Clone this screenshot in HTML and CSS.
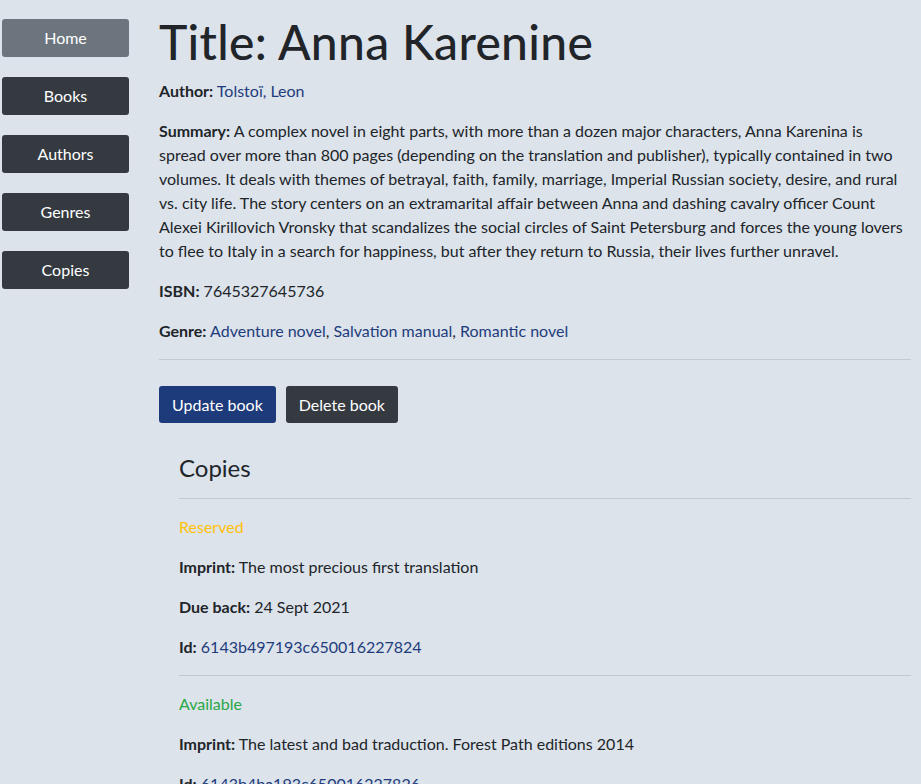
FILE: index.html
```html
<!DOCTYPE html>
<html lang="en">
<head>
<meta charset="utf-8">
<title>Anna Karenine</title>
<link rel="stylesheet" href="styles.css">
</head>
<body>
<div class="layout">
  <nav class="sidebar">
    <a class="nav-btn nav-home" href="#">Home</a>
    <a class="nav-btn" href="#">Books</a>
    <a class="nav-btn" href="#">Authors</a>
    <a class="nav-btn" href="#">Genres</a>
    <a class="nav-btn" href="#">Copies</a>
  </nav>
  <main class="content">
    <h1 class="title">Title: Anna Karenine</h1>
    <p><strong>Author:</strong> <a href="#">Tolstoï, Leon</a></p>
    <p><strong>Summary:</strong> A complex novel in eight parts, with more than a dozen major characters, Anna Karenina is spread over more than 800 pages (depending on the translation and publisher), typically contained in two volumes. It deals with themes of betrayal, faith, family, marriage, Imperial Russian society, desire, and rural vs. city life. The story centers on an extramarital affair between Anna and dashing cavalry officer Count Alexei Kirillovich Vronsky that scandalizes the social circles of Saint Petersburg and forces the young lovers to flee to Italy in a search for happiness, but after they return to Russia, their lives further unravel.</p>
    <p><strong>ISBN:</strong> 7645327645736</p>
    <p><strong>Genre:</strong> <a href="#">Adventure novel</a>, <a href="#">Salvation manual</a>, <a href="#">Romantic novel</a></p>
    <hr class="rule">
    <div class="actions">
      <a class="btn btn-primary" href="#">Update book</a>
      <a class="btn btn-dark" href="#">Delete book</a>
    </div>
    <section class="copies">
      <h4 class="copies-title">Copies</h4>
      <hr class="rule">
      <p class="status status-reserved">Reserved</p>
      <p><strong>Imprint:</strong> The most precious first translation</p>
      <p><strong>Due back:</strong> 24 Sept 2021</p>
      <p><strong>Id:</strong> <a href="#">6143b497193c650016227824</a></p>
      <hr class="rule">
      <p class="status status-available">Available</p>
      <p><strong>Imprint:</strong> The latest and bad traduction. Forest Path editions 2014</p>
      <p><strong>Id:</strong> <a href="#">6143b4ba193c650016227826</a></p>
    </section>
  </main>
</div>
</body>
</html>
```
FILE: styles.css
```css
* { box-sizing: border-box; }
html, body {
  margin: 0;
  background: #dce3eb;
}
body {
  font-family: "Lato", "Liberation Sans", sans-serif;
  font-size: 16px;
  line-height: 24px;
  color: #212529;
}
.layout {
  display: flex;
  align-items: flex-start;
}
.sidebar {
  width: 131px;
  flex: none;
  padding: 19px 0 0 2px;
  display: flex;
  flex-direction: column;
  gap: 20px;
}
.nav-btn {
  display: block;
  width: 127px;
  height: 38px;
  line-height: 38px;
  text-align: center;
  color: #fff;
  background: #343a40;
  border-radius: 3px;
  text-decoration: none;
}
.nav-home { background: #6c757d; }
.content {
  flex: 1;
  padding: 0 10px 0 28px;
}
.title {
  font-size: 48px;
  font-weight: 500;
  line-height: 56px;
  margin: 14px 0 9px;
  letter-spacing: 0.3px;
}
p { margin: 0 0 16px; }
strong { font-weight: 700; }
a { color: #1e3c7c; text-decoration: none; }
.rule {
  border: 0;
  border-top: 1px solid #c3c9d0;
  margin: 0;
}
.content > .rule { margin-top: 2px; }
.actions {
  display: flex;
  gap: 10px;
  margin: 26px 0 30px;
}
.btn {
  display: block;
  height: 37px;
  line-height: 37px;
  padding: 0 13px;
  color: #fff;
  border-radius: 3px;
}
.btn-primary { background: #1d3b7a; }
.btn-dark { background: #343a40; }
.copies { padding-left: 20px; }
.copies-title {
  font-size: 24px;
  font-weight: 400;
  line-height: 30px;
  margin: 0 0 15px;
}
.copies .rule { margin-bottom: 16px; }
.status-reserved { color: #ffc107; }
.status-available { color: #28a745; }
```
